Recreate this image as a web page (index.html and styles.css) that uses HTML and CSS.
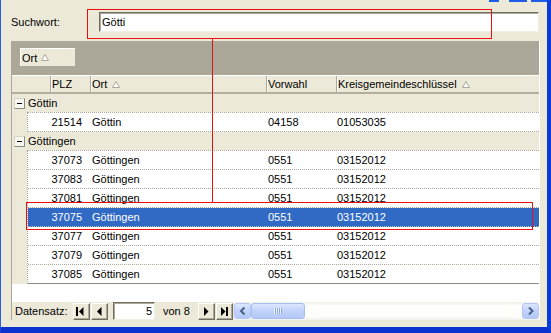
FILE: index.html
```html
<!DOCTYPE html>
<html>
  <head>
    <title>PLZ Suche</title>
    <link rel="stylesheet" href="styles.css">
  </head>
  <body>
    <div class="window">
      <span class="tbit tbit1"></span>
      <span class="tbit tbit2"></span>
      <span class="tbit tbit3"></span>

      <div class="search">
        <label class="search-label">Suchwort:</label>
        <div class="input">Götti</div>
      </div>

      <div class="grid">
        <div class="groupby">
          <span class="chip">Ort <svg class="sort" width="8" height="7"><path d="M4 .5 L7.5 6.5 H.5Z" fill="#fff" stroke="#ACA899"/></svg></span>
        </div>

        <div class="head">
          <div class="hc c-sel"></div>
          <div class="hc c-plz">PLZ</div>
          <div class="hc c-ort">Ort <svg class="sort" width="8" height="7"><path d="M4 .5 L7.5 6.5 H.5Z" fill="#fff" stroke="#ACA899"/></svg></div>
          <div class="hc c-vw">Vorwahl</div>
          <div class="hc c-kr">Kreisgemeindeschlüssel <svg class="sort" width="8" height="7"><path d="M4 .5 L7.5 6.5 H.5Z" fill="#fff" stroke="#ACA899"/></svg></div>
        </div>

        <div class="rows">
          <div class="group"><span class="minus"></span>Göttin</div>
          <div class="block">
            <div class="row"><span class="plz">21514</span><span class="ort">Göttin</span><span class="vw">04158</span><span class="kr">01053035</span></div>
          </div>

          <div class="group"><span class="minus"></span>Göttingen</div>
          <div class="block">
            <div class="row"><span class="plz">37073</span><span class="ort">Göttingen</span><span class="vw">0551</span><span class="kr">03152012</span></div>
            <div class="row"><span class="plz">37083</span><span class="ort">Göttingen</span><span class="vw">0551</span><span class="kr">03152012</span></div>
            <div class="row"><span class="plz">37081</span><span class="ort">Göttingen</span><span class="vw">0551</span><span class="kr">03152012</span></div>
            <div class="row sel"><span class="plz">37075</span><span class="ort">Göttingen</span><span class="vw">0551</span><span class="kr">03152012</span></div>
            <div class="row"><span class="plz">37077</span><span class="ort">Göttingen</span><span class="vw">0551</span><span class="kr">03152012</span></div>
            <div class="row"><span class="plz">37079</span><span class="ort">Göttingen</span><span class="vw">0551</span><span class="kr">03152012</span></div>
            <div class="row last"><span class="plz">37085</span><span class="ort">Göttingen</span><span class="vw">0551</span><span class="kr">03152012</span></div>
          </div>
        </div>

        <div class="empty"></div>

        <div class="nav">
          <span class="nav-label">Datensatz:</span>
          <button type="button" class="btn"><svg width="15" height="15"><rect x="2" y="3" width="2" height="9"/><polygon points="9.5,3 9.5,12 5,7.5"/></svg></button>
          <button type="button" class="btn btn-next"><svg width="15" height="15"><polygon points="9.5,3 9.5,12 5,7.5"/></svg></button>
          <div class="pos">5</div>
          <span class="von">von 8</span>
          <button type="button" class="btn"><svg width="15" height="15"><polygon points="5,3 5,12 9.5,7.5"/></svg></button>
          <button type="button" class="btn btn-next"><svg width="15" height="15"><polygon points="4,3 4,12 8.5,7.5"/><rect x="9" y="3" width="2" height="9"/></svg></button>
          <div class="hscroll">
            <span class="sarrow"><svg width="15" height="14"><path d="M9.5 3.5 L6 7 L9.5 10.5" fill="none" stroke="#4D6185" stroke-width="2"/></svg></span>
            <span class="thumb"><span class="grip"></span></span>
            <span class="track"></span>
            <span class="sarrow"><svg width="15" height="14"><path d="M6 3.5 L9.5 7 L6 10.5" fill="none" stroke="#4D6185" stroke-width="2"/></svg></span>
          </div>
        </div>
      </div>

      <!-- red markings drawn over the form -->
      <div class="mark mark-search"></div>
      <div class="mark-line"></div>
      <div class="mark mark-row"></div>
    </div>
  </body>
</html>
```

FILE: styles.css
```css
body { margin: 0; font: 11px "Liberation Sans", Arial, sans-serif; color: #000; }

.window {
  position: relative;
  width: 551px;
  height: 333px;
  box-sizing: border-box;
  background: #ECE9D8;
  border-left: 1px solid #2A5FE4;
  border-right: 4px solid #0A3CD8;
  border-bottom: 6px solid #0B32CF;
  padding: 12px 0 0 10px;
  overflow: hidden;
}

/* bits of the title bar buttons above */
.tbit { position: absolute; top: 0; height: 2px; background: #1D5BEA; }
.tbit1 { left: 488px; width: 10px; }
.tbit2 { left: 508px; width: 18px; }
.tbit3 { left: 530px; width: 16px; }

.search { display: flex; align-items: center; height: 20px; }
.search-label { width: 88px; }
.input {
  width: 440px;
  height: 20px;
  box-sizing: border-box;
  background: #fff;
  border: 1px solid;
  border-color: #716F64 #F1EFE2 #F1EFE2 #716F64;
  box-shadow: inset 1px 1px #ACA899;
  padding-left: 2px;
  line-height: 18px;
}

.grid {
  margin-top: 9px;
  width: 529px;
  box-sizing: border-box;
  border-left: 1px solid #ACA899;
  border-right: 1px solid #fff;
}

.groupby { height: 34px; box-sizing: border-box; background: #ACA899; padding: 7px 0 0 8px; }
.chip {
  display: flex;
  align-items: center;
  gap: 4px;
  width: 55px;
  height: 18px;
  box-sizing: border-box;
  background: #ECE9D8;
  border-top: 1px solid #fff;
  border-left: 1px solid #fff;
  padding-left: 1px;
}
.sort { display: block; }

.head {
  display: flex;
  height: 19px;
  box-sizing: border-box;
  background: #ECE9D8;
  border-top: 1px solid #fff;
  border-bottom: 2px solid #B3AF9F;
}
.hc {
  display: flex;
  align-items: center;
  gap: 5px;
  box-sizing: border-box;
  border-left: 1px solid #fff;
  border-right: 1px solid #ACA899;
}
.c-sel { width: 39px; border-left: none; }
.c-plz { width: 40px; }
.c-ort { width: 176px; }
.c-vw { width: 70px; }
.c-kr { flex: 1; border-right: none; }

.rows { background: #ECE9D8; }
.group { display: flex; align-items: center; height: 18px; padding-left: 2px; }
.minus {
  position: relative;
  width: 11px;
  height: 11px;
  box-sizing: border-box;
  margin-right: 3px;
  background: #F7F6F0;
  border: 1px solid #ACA899;
  border-color: #D8D4C4 #8C8A7E #8C8A7E #D8D4C4;
}
.minus::after {
  content: "";
  position: absolute;
  left: 2px;
  top: 4px;
  width: 5px;
  height: 1px;
  background: #000;
}

.block { margin-left: 15px; background: #fff; border-left: 1px dotted #ACA899; border-top: 1px dotted #ACA899; }
.row { display: flex; height: 19px; box-sizing: border-box; border-bottom: 1px dotted #ACA899; line-height: 18px; }
.row.last { border-bottom: 1px solid #8C8A7E; }
.row.sel { background: #316AC5; color: #fff; border-bottom-color: #C9BFA0; }
.plz { width: 62px; box-sizing: border-box; text-align: right; padding-right: 8px; }
.ort { width: 176px; box-sizing: border-box; padding-left: 2px; }
.vw { width: 70px; box-sizing: border-box; padding-left: 2px; }
.kr { padding-left: 1px; }

.empty { height: 18px; background: #fff; }

.nav { display: flex; align-items: center; height: 18px; background: #ECE9D8; }
.nav-label { width: 61px; padding-left: 3px; box-sizing: border-box; }
.btn {
  width: 17px;
  height: 17px;
  box-sizing: border-box;
  padding: 0;
  margin: 0;
  background: #ECE9D8;
  border: 1px solid;
  border-color: #fff #716F64 #716F64 #fff;
  box-shadow: inset -1px -1px #ACA899;
}
.btn svg { display: block; fill: #000; }
.btn-next { margin-left: 1px; }
.pos {
  width: 42px;
  height: 18px;
  box-sizing: border-box;
  margin-left: 5px;
  background: #fff;
  border: 1px solid;
  border-color: #716F64 #F1EFE2 #F1EFE2 #716F64;
  box-shadow: inset 1px 1px #ACA899;
  text-align: right;
  padding-right: 2px;
  line-height: 16px;
}
.von { margin-left: 8px; width: 35px; }

.hscroll {
  flex: 1;
  display: flex;
  height: 18px;
  margin-left: 1px;
  box-sizing: border-box;
  padding: 1px 0;
  background: linear-gradient(#EEEDE5, #FEFEFB 20%, #FEFEFB 80%, #F3F1EC);
}
.sarrow, .thumb {
  display: block;
  box-sizing: border-box;
  height: 16px;
  border: 1px solid #B4C6F2;
  border-radius: 3px;
  background: linear-gradient(#DCE6FE, #C1D3FB 50%, #B4C9F8);
}
.sarrow { width: 17px; }
.sarrow svg { display: block; }
.thumb { width: 54px; position: relative; border-color: #A6BCF0; }
.grip {
  position: absolute;
  left: 22px;
  top: 4px;
  width: 8px;
  height: 6px;
  background: repeating-linear-gradient(90deg, #EEF4FE 0 1px, #8CA6E4 1px 2px);
}
.track { flex: 1; }

/* markings */
.mark { position: absolute; box-sizing: border-box; border: 1px solid #E8100F; }
.mark-search { left: 86px; top: 9px; width: 405px; height: 30px; }
.mark-row { left: 25px; top: 202px; width: 507px; height: 28px; }
.mark-line { position: absolute; left: 211px; top: 38px; width: 1px; height: 164px; background: #E8100F; }
```
